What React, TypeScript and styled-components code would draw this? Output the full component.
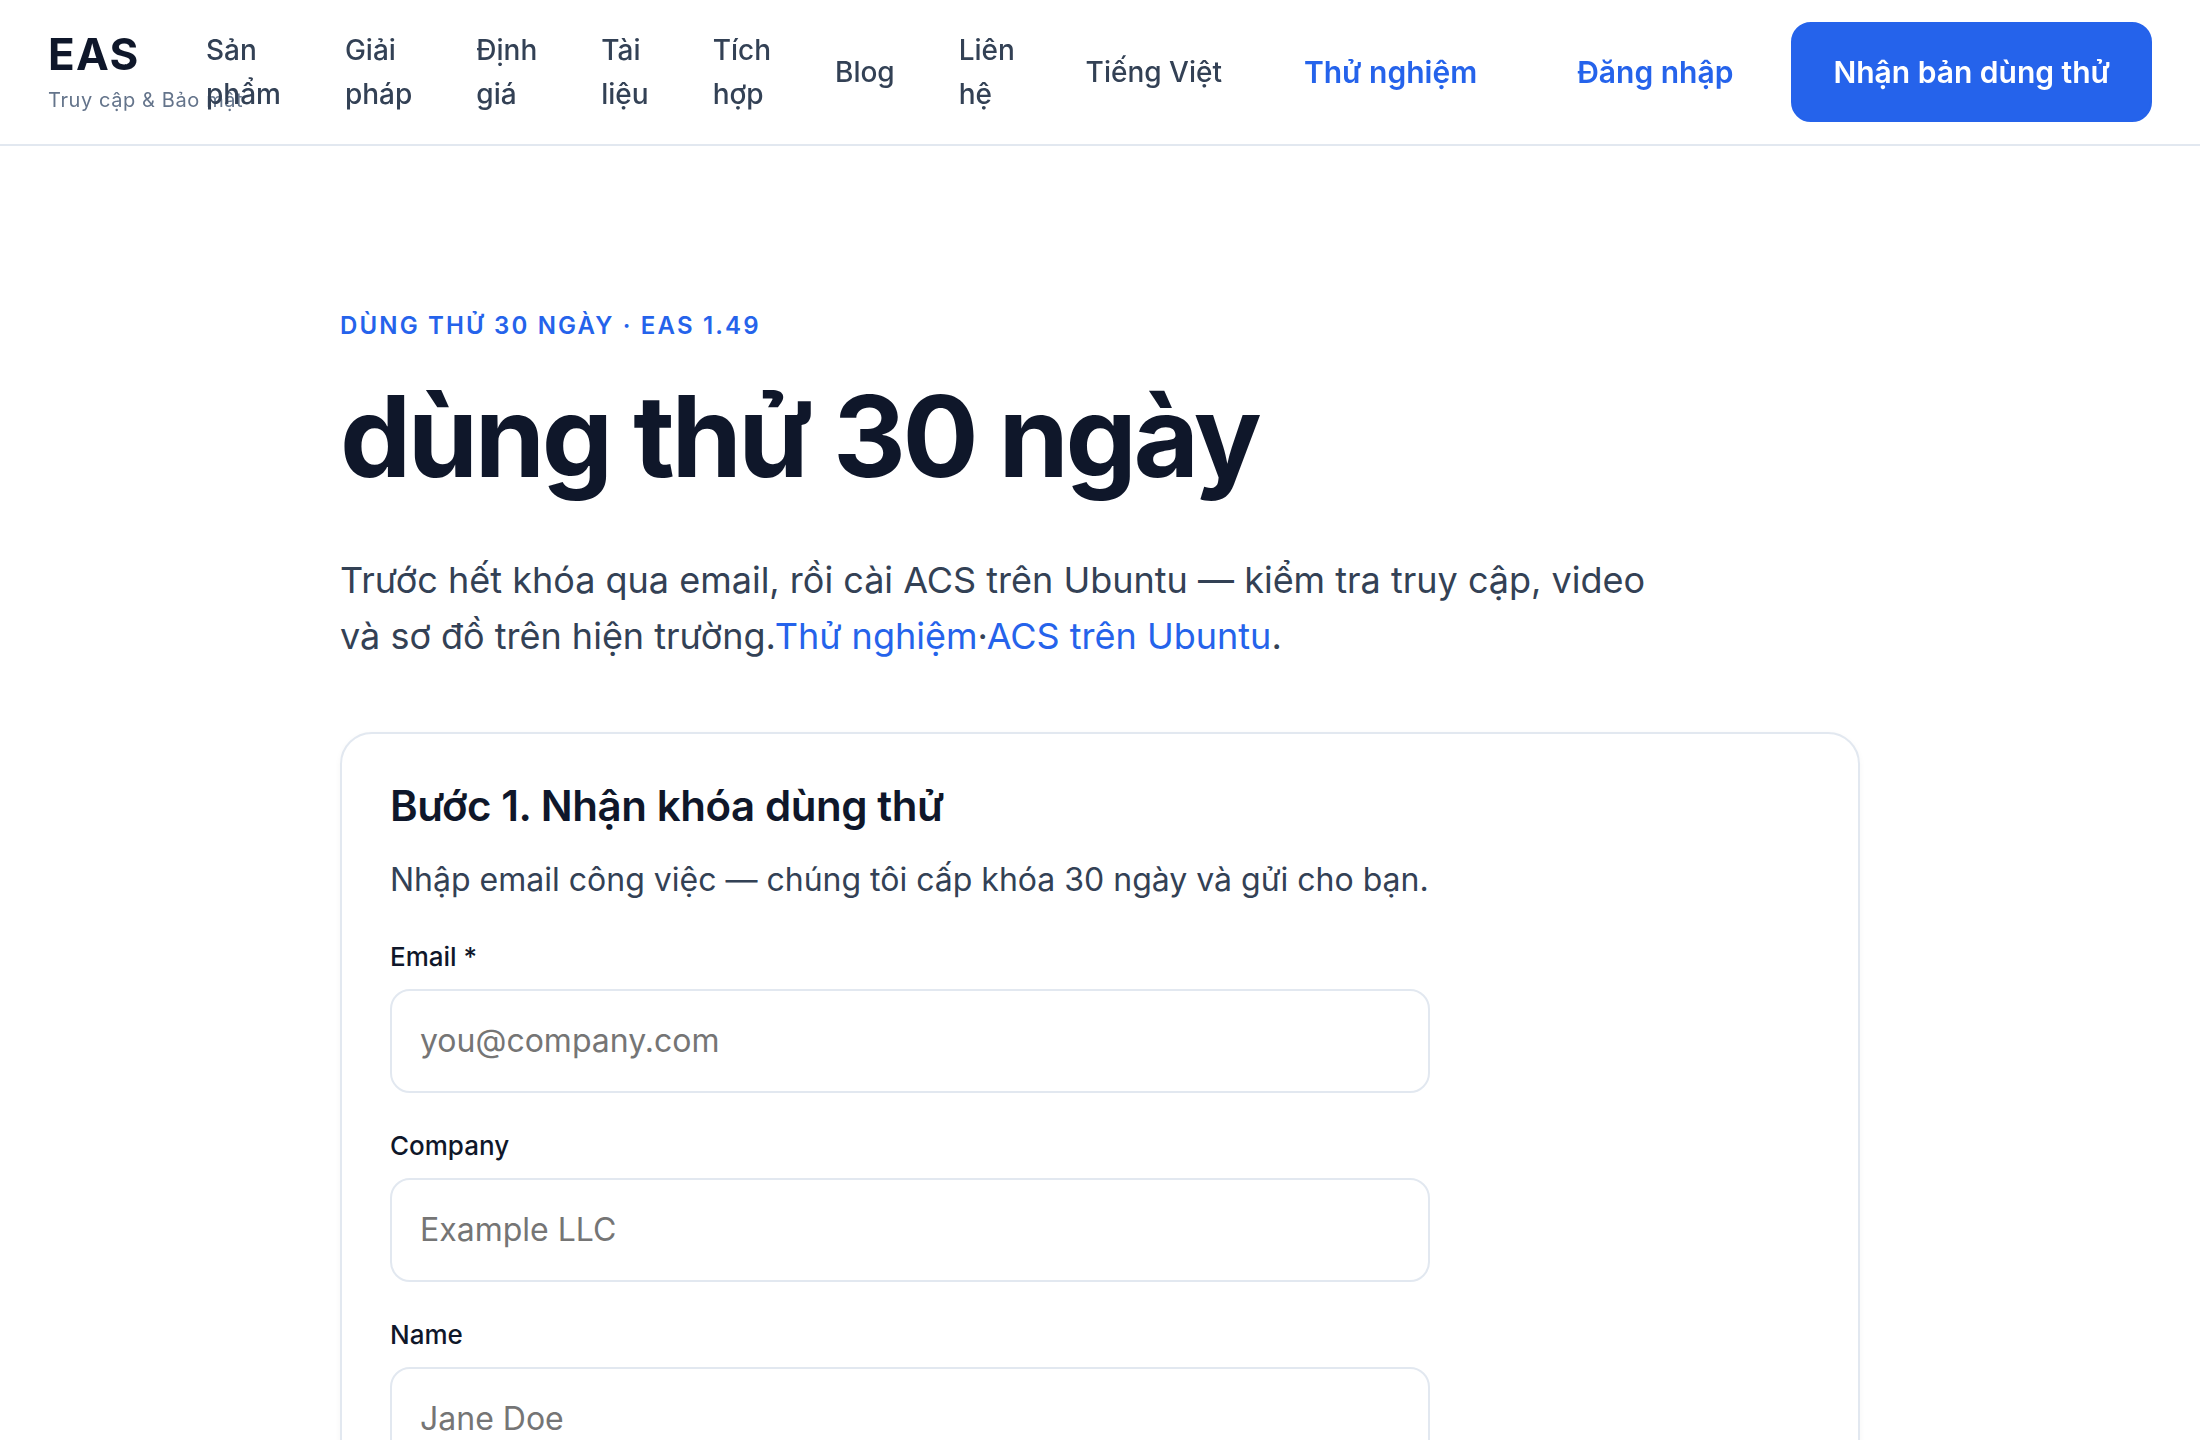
import React from "react";
import styled, { createGlobalStyle, css } from "styled-components";

const GlobalStyle = createGlobalStyle`
  *, *::before, *::after { box-sizing: border-box; }
  body {
    margin: 0;
    background: #ffffff;
    color: #334155;
    font-family: Inter, "Liberation Sans", sans-serif;
    font-size: 32px;
    line-height: 52px;
  }
  a { color: #2563eb; text-decoration: none; }
`;

const Header = styled.header`
  position: sticky;
  top: 0;
  z-index: 10;
  display: flex;
  align-items: center;
  gap: 64px;
  padding: 22px 48px;
  background: rgba(255, 255, 255, 0.95);
  backdrop-filter: blur(16px);
  border-bottom: 2px solid #e2e8f0;
`;

const Brand = styled.a`
  display: flex;
  flex-direction: column;
  width: 94px;
  flex: none;
  white-space: nowrap;
`;

const BrandName = styled.span`
  color: #0f172a;
  font-size: 44px;
  font-weight: 700;
  line-height: 56px;
  letter-spacing: 0.03em;
`;

const BrandTag = styled.span`
  color: #64748b;
  font-size: 20px;
  line-height: 36px;
  letter-spacing: 0.03em;
`;

const Nav = styled.nav`
  position: relative;
  display: flex;
  align-items: center;
  gap: 64px;
`;

const NavLink = styled.a<{ $stacked?: boolean }>`
  color: #334155;
  font-size: 28px;
  font-weight: 500;
  line-height: 44px;
  ${(p) => p.$stacked && css`width: min-content;`}
`;

const Language = styled.button`
  margin-right: 24px;
  padding: 0;
  border: 0;
  background: none;
  color: #334155;
  font: inherit;
  font-size: 28px;
  font-weight: 500;
  white-space: nowrap;
`;

const Actions = styled.div`
  display: flex;
  align-items: center;
  gap: 16px;
  margin-left: auto;
`;

const Action = styled.a<{ $primary?: boolean }>`
  padding: 22px 40px;
  border: 2px solid ${(p) => (p.$primary ? "#2563eb" : "transparent")};
  border-radius: 20px;
  background: ${(p) => (p.$primary ? "#2563eb" : "transparent")};
  color: ${(p) => (p.$primary ? "#ffffff" : "#2563eb")};
  font-size: 30px;
  font-weight: 600;
  line-height: 52px;
  white-space: nowrap;
`;

const Main = styled.main`
  max-width: 1616px;
  margin: 0 auto;
  padding: 160px 48px;
`;

const Eyebrow = styled.p`
  margin: 0 0 24px;
  color: #2563eb;
  font-size: 24px;
  font-weight: 600;
  line-height: 40px;
  letter-spacing: 0.09em;
  text-transform: uppercase;
`;

const Title = styled.h1`
  margin: 0 0 50px;
  color: #0f172a;
  font-size: 113px;
  font-weight: 700;
  line-height: 132px;
  letter-spacing: -0.03em;
`;

const Lead = styled.p`
  max-width: 1344px;
  margin: 0 0 68px;
  font-size: 36px;
  line-height: 56px;
`;

const Card = styled.section`
  padding: 48px;
  border: 2px solid #e2e8f0;
  border-radius: 32px;
  background: #ffffff;
  box-shadow: 0 2px 6px rgba(15, 23, 42, 0.04);
`;

const CardTitle = styled.h2`
  margin: 0 0 24px;
  color: #0f172a;
  font-size: 42px;
  font-weight: 600;
  line-height: 48px;
  letter-spacing: -0.01em;
`;

const CardText = styled.p`
  margin: 0 0 30px;
`;

const Form = styled.form`
  display: grid;
  gap: 32px;
  max-width: 1040px;
`;

const Field = styled.div`
  display: grid;
  gap: 12px;
`;

const Label = styled.label`
  color: #0f172a;
  font-size: 26px;
  font-weight: 500;
  line-height: 41px;
`;

const Input = styled.input`
  width: 100%;
  padding: 24px 28px;
  border: 2px solid #e2e8f0;
  border-radius: 20px;
  background: #ffffff;
  color: #0f172a;
  font: inherit;
  &::placeholder { color: #757575; }
`;

const links = [
  "Sản phẩm",
  "Giải pháp",
  "Định giá",
  "Tài liệu",
  "Tích hợp",
  "Blog",
  "Liên hệ",
];

const fields = [
  { id: "email", label: "Email *", type: "email", placeholder: "you@company.com" },
  { id: "company", label: "Company", type: "text", placeholder: "Example LLC" },
  { id: "name", label: "Name", type: "text", placeholder: "Jane Doe" },
];

export default function App() {
  return (
    <>
      <GlobalStyle />
      <Header>
        <Brand href="#">
          <BrandName>EAS</BrandName>
          <BrandTag>Truy cập &amp; Bảo mật</BrandTag>
        </Brand>
        <Nav>
          {links.map((text) => (
            <NavLink key={text} href="#" $stacked>
              {text}
            </NavLink>
          ))}
        </Nav>
        <Actions>
          <Language type="button">Tiếng Việt</Language>
          <Action href="#">Thử nghiệm</Action>
          <Action href="#">Đăng nhập</Action>
          <Action href="#" $primary>
            Nhận bản dùng thử
          </Action>
        </Actions>
      </Header>
      <Main>
        <Eyebrow>Dùng thử 30 ngày · EAS 1.49</Eyebrow>
        <Title>dùng thử 30 ngày</Title>
        <Lead>
          Trước hết khóa qua email, rồi cài ACS trên Ubuntu — kiểm tra truy cập, video và sơ đồ trên
          hiện trường.<a href="#">Thử nghiệm</a>·<a href="#">ACS trên Ubuntu</a>.
        </Lead>
        <Card>
          <CardTitle>Bước 1. Nhận khóa dùng thử</CardTitle>
          <CardText>Nhập email công việc — chúng tôi cấp khóa 30 ngày và gửi cho bạn.</CardText>
          <Form>
            {fields.map((f) => (
              <Field key={f.id}>
                <Label htmlFor={f.id}>{f.label}</Label>
                <Input id={f.id} type={f.type} placeholder={f.placeholder} />
              </Field>
            ))}
          </Form>
        </Card>
      </Main>
    </>
  );
}
